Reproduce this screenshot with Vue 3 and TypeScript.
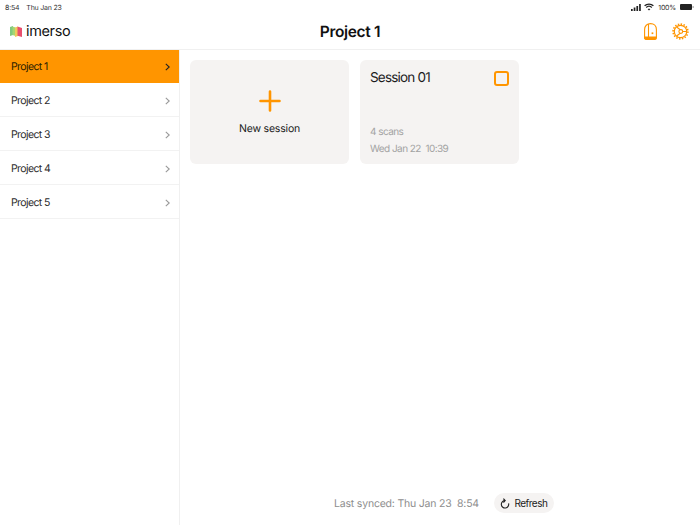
<script setup lang="ts">
const projects = ["Project 1", "Project 2", "Project 3", "Project 4", "Project 5"];
</script>

<template>
  <div class="screen">
    <div class="status">
      <div class="status-left">
        <span>8:54</span>
        <span>Thu Jan 23</span>
      </div>
      <div class="status-right">
        <svg width="10" height="7" viewBox="0 0 10 7" fill="#222">
          <rect x="0" y="5" width="1.7" height="2" />
          <rect x="2.7" y="3.5" width="1.7" height="3.5" />
          <rect x="5.4" y="2" width="1.7" height="5" />
          <rect x="8.1" y="0" width="1.7" height="7" />
        </svg>
        <svg class="wifi" width="10" height="8" viewBox="0 0 10 8" fill="none" stroke="#222" stroke-width="1.3">
          <path d="M0.6 2.8C3 0.5 7 0.5 9.4 2.8" />
          <path d="M2.2 4.5C3.8 3 6.2 3 7.8 4.5" />
          <path d="M5 7.6L3.7 6.2C4.4 5.6 5.6 5.6 6.3 6.2Z" fill="#222" stroke="none" />
        </svg>
        <span class="battery-text">100%</span>
        <svg width="14" height="6" viewBox="0 0 14 6">
          <rect x="0" y="0" width="12" height="6" rx="1" fill="#222" />
          <rect x="12.6" y="2" width="1" height="2" fill="#999" />
        </svg>
      </div>
    </div>

    <header class="topbar">
      <div class="brand">
        <svg class="logo" width="12" height="11" viewBox="0 0 12 11">
          <path d="M0 1L3 0V9L0 10Z" fill="#7fc97f" />
          <path d="M2.5 0.5L5.5 1.5V10L2.5 9Z" fill="#a6d672" />
          <path d="M5 1.5L8 0.5V10L5 11Z" fill="#f0c95c" />
          <path d="M7.5 0.5L12 2V11L7.5 9.8Z" fill="#e8506e" />
        </svg>
        <span class="brand-name">imerso</span>
      </div>
      <h1>Project 1</h1>
      <div class="actions">
        <svg width="13" height="17" viewBox="0 0 13 17" fill="none" stroke="#ff9500" stroke-width="1.1">
          <path d="M0.6 14.5V6.5C0.6 3 3 0.6 6.5 0.6C10 0.6 12.4 3 12.4 6.5V14.5C12.4 15.7 11.7 16.4 10.5 16.4H2.5C1.3 16.4 0.6 15.7 0.6 14.5Z" />
          <path d="M4.5 1V14" />
          <path d="M0.6 14H12.4V14.5C12.4 15.7 11.7 16.4 10.5 16.4H2.5C1.3 16.4 0.6 15.7 0.6 14.5Z" fill="#ff9500" />
          <rect x="7.6" y="9.4" width="1.7" height="1.7" fill="#ff9500" stroke="none" />
        </svg>
        <svg width="17" height="17" viewBox="0 0 17 17" fill="none" stroke="#ff9500">
          <circle cx="8.5" cy="8.5" r="6.2" stroke-width="1.2" />
          <circle cx="8.5" cy="8.5" r="7.4" stroke-width="1.6" stroke-dasharray="1.45 1.45" />
          <path d="M4.6 4L10.6 8.5L4.6 13M10.6 8.5H14.6" stroke-width="1.1" />
          <circle cx="8.8" cy="8.5" r="1.9" fill="#fff" stroke-width="1.1" />
        </svg>
      </div>
    </header>

    <div class="body">
      <aside class="sidebar">
        <div
          v-for="(project, i) in projects"
          :key="project"
          class="row"
          :class="{ active: i === 0 }"
        >
          <span>{{ project }}</span>
          <svg width="5" height="8" viewBox="0 0 5 8" fill="none" stroke="currentColor" stroke-width="1.1">
            <path d="M0.8 0.8L4.2 4L0.8 7.2" />
          </svg>
        </div>
      </aside>

      <main class="main">
        <div class="cards">
          <div class="card new-card">
            <svg width="24" height="24" viewBox="0 0 24 24" stroke="#ff9500" stroke-width="2.6" stroke-linecap="round">
              <path d="M12 2.5V21.5M2.5 12H21.5" />
            </svg>
            <span>New session</span>
          </div>
          <div class="card session-card">
            <div class="session-top">
              <span class="session-title">Session 01</span>
              <span class="check"></span>
            </div>
            <div class="session-meta">
              <span>4 scans</span>
              <span>Wed Jan 22&nbsp;&nbsp;10:39</span>
            </div>
          </div>
        </div>

        <footer class="sync">
          <span class="sync-text">Last synced: Thu Jan 23&nbsp;&nbsp;8:54</span>
          <button class="refresh">
            <svg width="10" height="11" viewBox="0 0 10 11" fill="none" stroke="#222" stroke-width="1.1">
              <path d="M5 2.6A3.7 3.7 0 1 0 8.6 5.4" />
              <path d="M3.4 0.6L5.2 2.6L3.4 4.5" />
            </svg>
            Refresh
          </button>
        </footer>
      </main>
    </div>
  </div>
</template>

<style scoped>
.screen {
  width: 700px;
  height: 525px;
  display: flex;
  flex-direction: column;
  overflow: hidden;
  background: #fff;
  color: #1c1c1e;
  font-family: Inter, "Liberation Sans", sans-serif;
  text-rendering: geometricPrecision;
}

.status {
  height: 14px;
  padding: 0 6px 0 5px;
  display: flex;
  align-items: center;
  justify-content: space-between;
  font-size: 7px;
  letter-spacing: -0.2px;
  color: #333;
}

.status-left {
  display: flex;
  gap: 7px;
}

.status-right {
  display: flex;
  align-items: center;
  gap: 3px;
}

.battery-text {
  margin: 0 1px;
}

.topbar {
  height: 35px;
  padding: 0 11px 0 10px;
  display: flex;
  align-items: center;
  justify-content: space-between;
  position: relative;
  border-bottom: 1px solid #f0f0f0;
}

.brand {
  display: flex;
  align-items: center;
  gap: 4px;
}

.brand-name {
  font-size: 14.5px;
  letter-spacing: -0.35px;
  color: #111;
}

.topbar h1 {
  position: absolute;
  left: 0;
  right: 0;
  margin: 0;
  text-align: center;
  font-size: 15.5px;
  font-weight: 600;
  letter-spacing: -0.35px;
  color: #111;
}

.actions {
  display: flex;
  align-items: center;
  gap: 15px;
}

.body {
  flex: 1;
  display: flex;
  min-height: 0;
}

.sidebar {
  width: 180px;
  box-sizing: border-box;
  border-right: 1px solid #f0f0f0;
}

.row {
  height: 34px;
  box-sizing: border-box;
  padding: 2px 9px 0 11px;
  display: flex;
  align-items: center;
  justify-content: space-between;
  font-size: 10.5px;
  letter-spacing: -0.6px;
  color: #2c2c2c;
  border-bottom: 1px solid #f2f2f2;
}

.row svg {
  color: #999;
}

.row.active {
  height: 33px;
  padding-top: 0;
  background: #ff9500;
  border-bottom: 0;
  color: #2a1c00;
}

.row.active svg {
  color: #222;
}

.main {
  flex: 1;
  padding: 10px;
  display: flex;
  flex-direction: column;
  justify-content: space-between;
}

.cards {
  display: flex;
  gap: 11px;
}

.card {
  width: 159px;
  height: 104px;
  box-sizing: border-box;
  border-radius: 6px;
  background: #f5f3f2;
}

.new-card {
  display: flex;
  flex-direction: column;
  align-items: center;
  justify-content: center;
  gap: 9px;
  padding-bottom: 1px;
  font-size: 10.5px;
  letter-spacing: -0.2px;
  color: #222;
}

.session-card {
  padding: 10px;
  display: flex;
  flex-direction: column;
  justify-content: space-between;
}

.session-top {
  display: flex;
  align-items: center;
  justify-content: space-between;
}

.session-title {
  font-size: 13.5px;
  letter-spacing: -0.8px;
  color: #1c1c1e;
}

.check {
  width: 15px;
  height: 15px;
  box-sizing: border-box;
  border: 2px solid #ff9500;
  border-radius: 3px;
}

.session-meta {
  display: flex;
  flex-direction: column;
  gap: 3px;
  margin-bottom: -2px;
  font-size: 10px;
  letter-spacing: -0.55px;
  line-height: 14px;
  color: #a3a3a3;
}

.sync {
  display: flex;
  align-items: center;
  justify-content: center;
  gap: 15px;
  margin-bottom: 2px;
  margin-left: 8px;
}

.sync-text {
  font-size: 10.5px;
  letter-spacing: -0.2px;
  color: #8e8e8e;
}

.refresh {
  width: 60px;
  height: 20px;
  padding: 0;
  display: flex;
  align-items: center;
  justify-content: center;
  gap: 4px;
  border: 0;
  border-radius: 10px;
  background: #f5f3f2;
  font-family: inherit;
  font-size: 10px;
  letter-spacing: -0.5px;
  color: #222;
}
</style>
